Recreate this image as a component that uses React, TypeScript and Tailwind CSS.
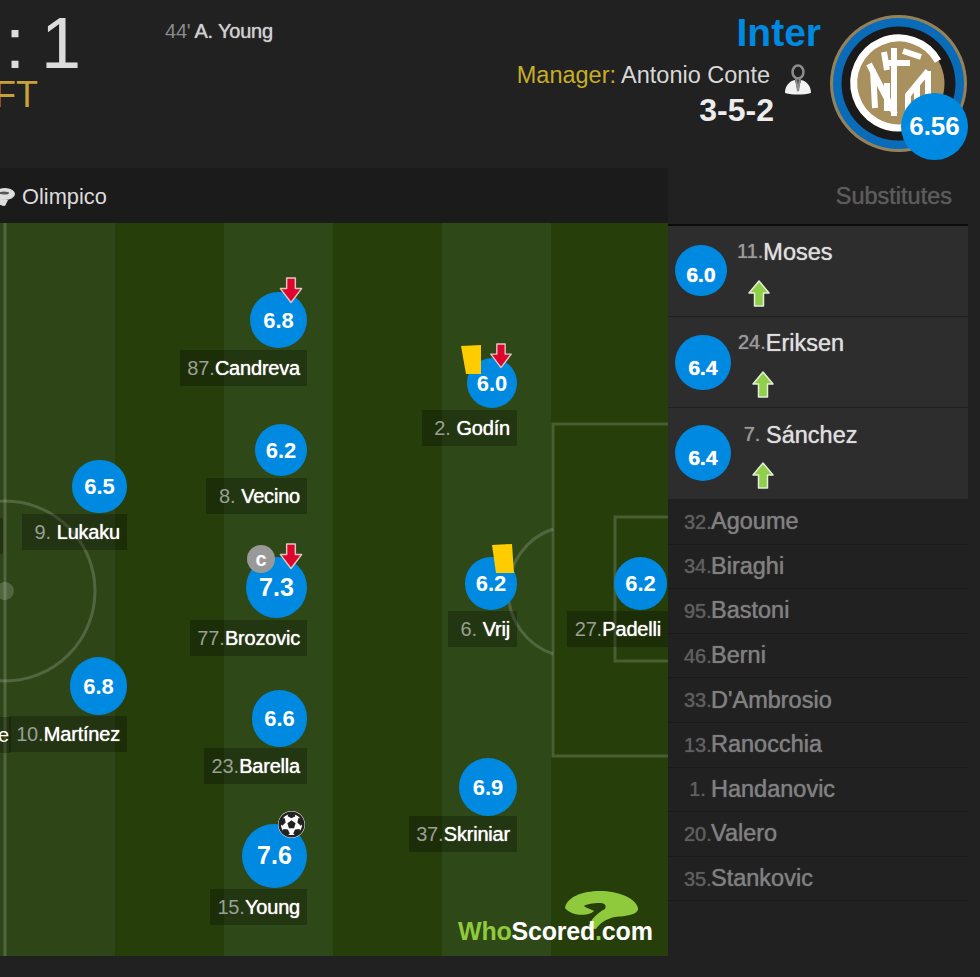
import { FaFutbol } from 'react-icons/fa';

const SUBS = [
  { num: '32', name: 'Agoume' },
  { num: '34', name: 'Biraghi' },
  { num: '95', name: 'Bastoni' },
  { num: '46', name: 'Berni' },
  { num: '33', name: "D'Ambrosio" },
  { num: '13', name: 'Ranocchia' },
  { num: '1', name: 'Handanovic' },
  { num: '20', name: 'Valero' },
  { num: '35', name: 'Stankovic' },
];

function ArrowDown({ className }: { className: string }) {
  return (
    <svg className={className} viewBox="0 0 24 28">
      <path d="M7.500 1h9v11h6.500L12 26.500 1 12h6.500z" fill="#e0042d" stroke="#d9c9c4" strokeWidth="1.5" strokeLinejoin="round" />
    </svg>
  );
}

function ArrowUp() {
  return (
    <svg className="w-[22px] h-[27px]" viewBox="0 0 22 27">
      <path d="M11 1l10 12h-5.500v13h-9V13H1z" fill="#8fcf4a" stroke="#e4efd6" strokeWidth="1.5" strokeLinejoin="round" />
    </svg>
  );
}

function YellowCard({ className, points }: { className: string; points: string }) {
  return (
    <svg className={className} viewBox="0 0 24 30">
      <polygon points={points} fill="#ffcc00" />
    </svg>
  );
}

function Player({
  pos,
  circle,
  text = 'text-[22px]',
  rating,
  num,
  name,
  children,
}: {
  pos: string;
  circle: string;
  text?: string;
  rating: string;
  num: string;
  name: string;
  children?: React.ReactNode;
}) {
  return (
    <div className={`absolute flex flex-col items-end ${pos}`}>
      <div className={`flex items-center justify-center rounded-full bg-[#0089e0] font-bold text-white ${circle} ${text}`}>
        {rating}
      </div>
      <div className="mt-[2px] flex h-[36px] items-center whitespace-nowrap bg-black/25 px-[7px] text-[20px] tracking-[-0.2px]">
        <span className="w-[28px] text-center text-[#9a9f94]">{num}.</span>
        <span className="text-white [text-shadow:0_0_1px_#fff]">{name}</span>
      </div>
      {children}
    </div>
  );
}

function InterBadge() {
  return (
    <div className="relative mr-[13px] mt-[15px] h-[145px] w-[137px] shrink-0">
      <svg className="h-[137px] w-[137px]" viewBox="0 0 137 137">
        <circle cx="68.500" cy="68.500" r="68.500" fill="#94825a" />
        <circle cx="68.500" cy="68.500" r="65.500" fill="#0a6cb8" />
        <circle cx="68.500" cy="68.500" r="57" fill="#1a1a1a" />
        <circle cx="68.500" cy="68.500" r="46" fill="#a8915f" />
        <g fill="none" stroke="#fff" strokeWidth="6">
          <path d="M108 46A45 45 0 1 0 78 112" strokeWidth="7" />
          <path d="M39 49L65 99M43 55L45 93M57 68V96M64 33V101" />
          <path d="M54 37L57 55M57 48H80M73 36L91 42" />
          <path d="M98 56L78 80V101M98 56V79M87 70V96" />
        </g>
      </svg>
      <div className="absolute left-[71px] top-[78px] flex h-[67px] w-[67px] items-center justify-center rounded-full bg-[#0089e0] text-[26px] font-bold text-white">
        6.56
      </div>
    </div>
  );
}

function ManagerIcon() {
  return (
    <svg className="ml-[15px] mt-[7px] h-[32px] w-[26px]" viewBox="0 0 26 32">
      <ellipse cx="13" cy="8" rx="5.500" ry="6.500" fill="none" stroke="#8c8c8c" strokeWidth="2.500" />
      <path d="M0 29C0 21 5 17 10 16L13 28L16 16C21 17 26 21 26 29C18 31 8 31 0 29Z" fill="#f2f2f2" />
      <path d="M11 14L13 27L15 14" fill="none" stroke="#8c8c8c" strokeWidth="2" />
    </svg>
  );
}

function PitchLines() {
  return (
    <svg className="absolute inset-0 h-[733px] w-[668px]" viewBox="0 0 668 733" fill="none" stroke="#fff" strokeOpacity="0.17" strokeWidth="3">
      <path d="M5 0V733" />
      <circle cx="5" cy="368" r="90" />
      <circle cx="5" cy="368" r="9" fill="#fff" fillOpacity="0.17" stroke="none" />
      <path d="M668 201H553V533H668" />
      <path d="M668 294H615V438H668" />
      <path d="M553 306A66 66 0 0 0 553 431" />
    </svg>
  );
}

function WhoScoredLogo() {
  return (
    <div className="absolute left-[458px] top-[667px] h-[60px] w-[200px]">
      <svg className="absolute left-[102px] top-0 h-[54px] w-[80px]" viewBox="0 0 80 54">
        <path
          d="M5 18C7 7 22 1 40 1C58 1 76 8 78 18C79 25 65 26 55 27C46 29 40 33 36 39L28 38C31 29 37 23 45 19C47 15 44 13 40 13C33 13 27 14 24 16C26 18 31 19 34 21C30 26 12 27 5 18Z"
          fill="#8fca3c"
        />
      </svg>
      <div className="relative mt-[27px] whitespace-nowrap text-[25px] font-bold leading-[28px] tracking-[-0.2px] text-white">
        <span className="text-[#8fca3c]">Who</span>Scored<span className="text-[#8fca3c]">.</span>com
      </div>
    </div>
  );
}

export default function App() {
  return (
    <div className="h-[977px] w-[980px] overflow-hidden bg-[#212121] font-['Liberation_Sans',Arial,sans-serif]">
      {/* Header */}
      <div className="flex h-[168px] items-start">
        <div className="w-[81px] shrink-0 overflow-hidden">
          <div className="flex h-[77px] items-start justify-end gap-[16px] pt-[9px] text-[72px] leading-[68px] text-[#dcdcdc]">
            <span>:</span>
            <span>1</span>
          </div>
          <div className="flex w-[38px] justify-end whitespace-nowrap text-[36px] leading-none text-[#c9a13b]">FT</div>
        </div>
        <div className="ml-[84px] mt-[16px] flex items-center gap-[4px] text-[20px] tracking-[-0.2px]">
          <span className="text-[#8a8a8a]">44'</span>
          <span className="text-[#cfcfcf] [text-shadow:0_0_1px_#cfcfcf]">A. Young</span>
        </div>
        <div className="ml-auto mr-[9px] mt-[11px] flex flex-col items-end">
          <div className="text-[39px] font-bold leading-[44px] text-[#0089e0]">Inter</div>
          <div className="mr-[10px] mt-[4px] flex h-[34px] items-center text-[23.5px]">
            <span className="text-[#c5ad2a]">Manager:</span>
            <span className="ml-[5px] text-[#d8d8d8]">Antonio Conte</span>
            <ManagerIcon />
          </div>
          <div className="mr-[47px] -mt-[1px] text-[32px] font-bold leading-[36px] text-[#ececec]">3-5-2</div>
        </div>
        <InterBadge />
      </div>

      <div className="flex">
        {/* Pitch column */}
        <div className="w-[668px] shrink-0">
          <div className="flex h-[55px] items-center bg-[#1b1b1b] pt-[3px]">
            <svg className="-ml-[5px] h-[20px] w-[20px]" viewBox="0 0 20 20">
              <ellipse cx="10" cy="7" rx="10" ry="6" fill="#ddd" />
              <ellipse cx="9" cy="6" rx="5" ry="1.500" fill="#555" />
              <path d="M0 8v4c1 4 6 7 10 7l3-6c-5 0-11-2-13-5z" fill="#ddd" />
            </svg>
            <span className="ml-[7px] text-[21.8px] text-[#dcdcdc]">Olimpico</span>
          </div>
          <div className="relative h-[733px] overflow-hidden">
            <div className="flex h-full">
              <div className="w-[115px] bg-[#2e4617]" />
              <div className="w-[109px] bg-[#263e0a]" />
              <div className="w-[109px] bg-[#2f4818]" />
              <div className="w-[109px] bg-[#263e0a]" />
              <div className="w-[109px] bg-[#2f4818]" />
              <div className="w-[117px] bg-[#263e0a]" />
            </div>
            <PitchLines />

            <Player pos="right-[361px] top-[69px]" circle="h-[56px] w-[57px]" rating="6.8" num="87" name="Candreva">
              <ArrowDown className="absolute right-[4px] -top-[15px] h-[27px] w-[24px]" />
            </Player>
            <Player pos="right-[361px] top-[201px]" circle="h-[52px] w-[52px]" rating="6.2" num="8" name="Vecino" />
            <Player pos="right-[361px] top-[334px]" circle="h-[61px] w-[61px]" text="text-[25px]" rating="7.3" num="77" name="Brozovic">
              <div className="absolute -top-[12px] right-[32px] flex h-[28px] w-[28px] items-center justify-center rounded-full bg-[#999] text-[20px] font-bold leading-none text-white">
                c
              </div>
              <ArrowDown className="absolute right-[4px] -top-[14px] h-[27px] w-[24px]" />
            </Player>
            <Player pos="right-[361px] top-[467px]" circle="h-[57px] w-[55px] -mb-[1px]" rating="6.6" num="23" name="Barella" />
            <Player pos="right-[361px] top-[601px]" circle="h-[64px] w-[65px] -mb-[1px]" text="text-[25px]" rating="7.6" num="15" name="Young">
              <div className="absolute -top-[13px] right-[2px] flex h-[27px] w-[27px] items-center justify-center rounded-full bg-white text-[27px] text-[#222]">
                <FaFutbol />
              </div>
            </Player>
            <Player pos="right-[541px] top-[237px]" circle="h-[53px] w-[55px] -mb-[1px]" rating="6.5" num="9" name="Lukaku" />
            <Player pos="right-[541px] top-[434px]" circle="h-[58px] w-[57px] -mb-[1px]" rating="6.8" num="10" name="Martínez" />
            <Player pos="right-[151px] top-[135px]" circle="h-[50px] w-[50px]" rating="6.0" num="2" name="Godín">
              <YellowCard className="absolute -top-[13px] right-[34px] h-[30px] w-[24px]" points="2,1 22,0 22,29 7,29" />
              <ArrowDown className="absolute -top-[15px] right-[4px] h-[26px] w-[24px]" />
            </Player>
            <Player pos="right-[151px] top-[334px]" circle="h-[53px] w-[52px] -mb-[1px]" rating="6.2" num="6" name="Vrij">
              <YellowCard className="absolute -top-[13px] right-[3px] h-[30px] w-[24px]" points="2,1 22,0 24,29 6,29" />
            </Player>
            <Player pos="right-[151px] top-[535px]" circle="h-[58px] w-[58px] -mb-[2px]" rating="6.9" num="37" name="Skriniar" />
            <Player pos="right-0 top-[334px]" circle="h-[53px] w-[53px] mr-px -mb-[1px]" rating="6.2" num="27" name="Padelli" />

            {/* cut off labels on the left edge */}
            <div className="absolute left-0 top-[295px] h-[36px] w-[3px] bg-black/25" />
            <div className="absolute left-0 top-[494px] flex h-[36px] w-[11px] items-center justify-end overflow-hidden bg-black/25 pr-[2px] text-[20px] text-white">
              e
            </div>

            <WhoScoredLogo />
          </div>
        </div>

        {/* Substitutes */}
        <div className="w-[300px] shrink-0 [text-shadow:0_0_1px_currentColor]">
          <div className="flex h-[58px] items-center justify-end border-b-2 border-[#0c0c0c] pr-[16px] pt-[2px] text-[23.5px] text-[#5c5c5c]">
            Substitutes
          </div>
          <div className="flex h-[91px] border-b border-[#1f1f1f] bg-[#2d2d2d] pl-[7px]">
            <div className="mt-[19px] flex h-[51px] w-[52px] items-center justify-center rounded-full bg-[#0089e0] pt-[9px] text-[21px] font-bold text-white">6.0</div>
            <div className="ml-[10px]">
              <div className="mt-[9px] flex items-center">
                <span className="-mt-[4px] text-[20px] text-[#9a9a9a]">11.</span>
                <span className="text-[23.5px] text-[#dedede]">Moses</span>
              </div>
              <div className="ml-[11px] mt-[10px]"><ArrowUp /></div>
            </div>
          </div>
          <div className="flex h-[91px] border-b border-[#1f1f1f] bg-[#2d2d2d] pl-[7px]">
            <div className="mt-[18px] flex h-[55px] w-[56px] items-center justify-center rounded-full bg-[#0089e0] pt-[10px] text-[21px] font-bold text-white">6.4</div>
            <div className="ml-[7px]">
              <div className="mt-[9px] flex items-center">
                <span className="-mt-[4px] text-[20px] text-[#9a9a9a]">24.</span>
                <span className="text-[23.5px] text-[#dedede]">Eriksen</span>
              </div>
              <div className="ml-[14px] mt-[10px]"><ArrowUp /></div>
            </div>
          </div>
          <div className="flex h-[92px] border-b border-[#1f1f1f] bg-[#2d2d2d] pl-[7px]">
            <div className="mt-[17px] flex h-[56px] w-[56px] items-center justify-center rounded-full bg-[#0089e0] pt-[10px] text-[21px] font-bold text-white">6.4</div>
            <div className="ml-[7px]">
              <div className="mt-[10px] flex items-center">
                <span className="-mt-[4px] w-[28px] text-center text-[20px] text-[#9a9a9a]">7.</span>
                <span className="text-[23.5px] text-[#dedede]">Sánchez</span>
              </div>
              <div className="ml-[14px] mt-[9px]"><ArrowUp /></div>
            </div>
          </div>
          {SUBS.map((sub) => (
            <div key={sub.num} className="flex h-[44.600px] items-center border-b border-[#1a1a1a] pl-[16px]">
              <span className="w-[27px] text-center text-[20px] text-[#5f5f5f]">{sub.num}.</span>
              <span className="text-[23.5px] text-[#808080]">{sub.name}</span>
            </div>
          ))}
        </div>
      </div>
    </div>
  );
}
